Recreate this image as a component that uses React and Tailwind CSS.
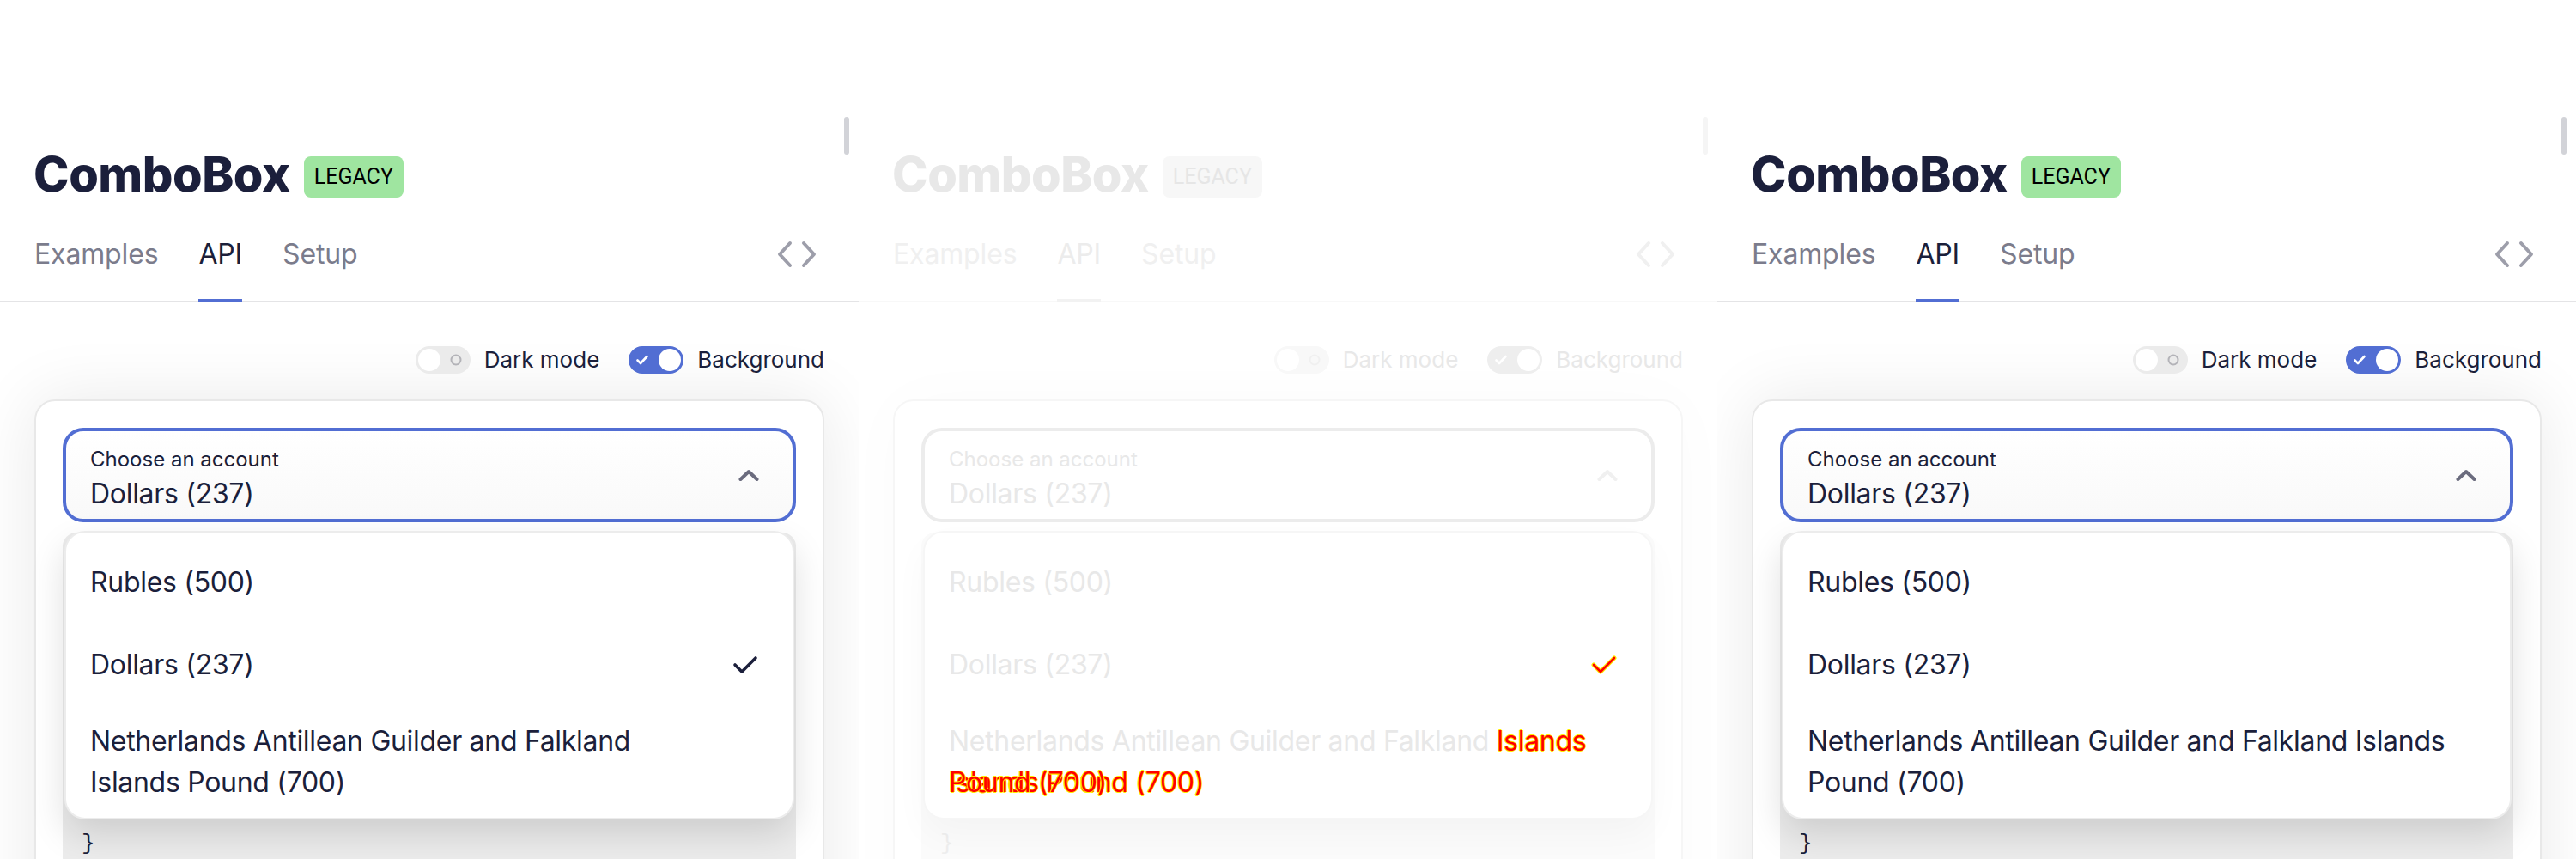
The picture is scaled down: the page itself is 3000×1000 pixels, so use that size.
import React from 'react';

const themes = {
  normal: {
    title: 'text-[#1b1f3b]',
    badge: 'bg-[#9fe5a0] text-black',
    tab: 'text-[#7b7c8c]',
    tabActive: 'text-[#1b1f3b] border-[#526ed3]',
    divider: 'border-[#e4e4e6]',
    icon: 'text-[#9d9eaa]',
    scroll: 'bg-[#d2d3d8]',
    text: 'text-[#1b1f3b]',
    toggleOff: 'bg-[#ebebeb]',
    toggleOn: 'bg-[#526ed3]',
    ring: 'text-[#b3b3b8]',
    card: 'border-[#e8e8e8] shadow-[0_0_80px_rgba(0,0,0,0.09)]',
    input: 'border-[#526ed3] bg-gradient-to-b from-white to-[#f9f9f9]',
    chevron: 'text-[#6b6c7e]',
    dropdown: 'border-[#ececec] shadow-[0_18px_40px_rgba(0,0,0,0.13)]',
    code: 'bg-[#ececec]',
  },
  faded: {
    title: 'text-[#e8e8e8]',
    badge: 'bg-[#f7f7f7] text-[#e6e6e6]',
    tab: 'text-[#f0f0f0]',
    tabActive: 'text-[#ececec] border-[#f2f2f2]',
    divider: 'border-[#f8f8f8]',
    icon: 'text-[#f0f0f0]',
    scroll: 'bg-[#f5f5f5]',
    text: 'text-[#e8e8e8]',
    toggleOff: 'bg-[#f8f8f8]',
    toggleOn: 'bg-[#eeeeee]',
    ring: 'text-[#f0f0f0]',
    card: 'border-[#f6f6f6] shadow-[0_0_80px_rgba(0,0,0,0.02)]',
    input: 'border-[#ececec] bg-white',
    chevron: 'text-[#f0f0f0]',
    dropdown: 'border-[#f6f6f6] shadow-[0_18px_40px_rgba(0,0,0,0.03)]',
    code: 'bg-[#fbfbfb]',
  },
};

const red = 'text-[#ff0000] [text-shadow:1px_0_#ffee00,-1px_0_#ffee00,0_1px_#ffee00,0_-1px_#ffee00]';

const Toggle = ({ on, t }) => (
  <div className={`relative w-[64px] h-[32px] rounded-full ${on ? t.toggleOn : t.toggleOff}`}>
    {on ? (
      <>
        <svg className="absolute left-[8px] top-[8px]" width="16" height="16" viewBox="0 0 16 16" fill="none">
          <path d="M2.5 8.5l3.5 3.5 7.5-8" stroke="white" strokeWidth="2.6" strokeLinecap="round" strokeLinejoin="round" />
        </svg>
        <div className="absolute right-[3px] top-[3px] w-[26px] h-[26px] rounded-full bg-white" />
      </>
    ) : (
      <>
        <div className="absolute left-[3px] top-[3px] w-[26px] h-[26px] rounded-full bg-white" />
        <svg className={`absolute left-[40px] top-[9px] ${t.ring}`} width="14" height="14" viewBox="0 0 14 14" fill="none">
          <circle cx="7" cy="7" r="5.5" stroke="currentColor" strokeWidth="2" />
        </svg>
      </>
    )}
  </div>
);

const Check = ({ diff }) =>
  diff ? (
    <svg className="ml-auto mr-[12px]" width="30" height="22" viewBox="0 0 30 22" fill="none">
      <path d="M3 11l8 8L27 3" stroke="#ffee00" strokeWidth="5" strokeLinecap="round" strokeLinejoin="round" />
      <path d="M3 11l8 8L27 3" stroke="#ff0000" strokeWidth="2.6" strokeLinecap="round" strokeLinejoin="round" />
    </svg>
  ) : (
    <svg className="ml-auto mr-[12px] text-[#1b1f3b]" width="30" height="22" viewBox="0 0 30 22" fill="none">
      <path d="M3 11l8 8L27 3" stroke="currentColor" strokeWidth="3.6" strokeLinecap="round" strokeLinejoin="round" />
    </svg>
  );

const Panel = ({ variant }) => {
  const t = variant === 'diff' ? themes.faded : themes.normal;
  const showCheck = variant !== 'b';

  let longOption;
  if (variant === 'a') {
    longOption = (
      <>
        Netherlands Antillean Guilder and Falkland
        <br />
        Islands Pound (700)
      </>
    );
  } else if (variant === 'b') {
    longOption = (
      <>
        Netherlands Antillean Guilder and Falkland Islands
        <br />
        Pound (700)
      </>
    );
  } else {
    longOption = (
      <>
        Netherlands Antillean Guilder and Falkland <span className={red}>Islands</span>
        <br />
        <span className="relative inline-block">
          <span className={red}>Islands Pound (700)</span>
          <span className={`absolute left-0 top-0 ${red}`}>Pound (700)</span>
        </span>
      </>
    );
  }

  return (
    <div className="relative w-[1000px] h-[1000px] shrink-0 overflow-hidden bg-white font-['Inter',sans-serif]">
      {/* scrollbar */}
      <div className={`absolute left-[983px] top-[136px] w-[6px] h-[44px] rounded-full ${t.scroll}`} />

      {/* header */}
      <div className="pt-[171px]">
        <div className="flex items-start px-[39px]">
          <h1 className={`text-[56px] leading-[64px] font-extrabold tracking-[-0.5px] ${t.title}`}>ComboBox</h1>
          <span
            className={`ml-[16px] mt-[11px] h-[48px] px-[12px] rounded-[8px] flex items-center text-[25px] font-['Roboto',sans-serif] ${t.badge}`}
          >
            LEGACY
          </span>
        </div>

        <div className={`mt-[41px] flex items-end px-[40px] border-b-2 ${t.divider}`}>
          <div className="flex gap-[47px] text-[32px] leading-[40px] tracking-[-0.15px]">
            <span className={`pb-[32px] -mb-[2px] border-b-4 border-transparent ${t.tab}`}>Examples</span>
            <span className={`pb-[32px] -mb-[2px] border-b-4 ${t.tabActive}`}>API</span>
            <span className={`pb-[32px] -mb-[2px] border-b-4 border-transparent ${t.tab}`}>Setup</span>
          </div>
          <svg
            className={`ml-auto mb-[38px] mr-[8px] ${t.icon}`}
            width="48"
            height="32"
            viewBox="0 0 48 32"
            fill="none"
          >
            <path d="M16 3L4 16l12 13M32 3l12 13-12 13" stroke="currentColor" strokeWidth="4" strokeLinecap="round" strokeLinejoin="round" />
          </svg>
        </div>
      </div>

      {/* toggles */}
      <div className={`mt-[51px] flex items-center justify-end pr-[40px] text-[26px] leading-[32px] ${t.text}`}>
        <Toggle on={false} t={t} />
        <span className="ml-[16px]">Dark mode</span>
        <div className="ml-[34px]">
          <Toggle on t={t} />
        </div>
        <span className="ml-[16px]">Background</span>
      </div>

      {/* demo card */}
      <div className={`mt-[30px] mx-[40px] h-[700px] rounded-[24px] border-2 bg-white p-[31px] ${t.card}`}>
        <div className="relative">
          <div className={`h-[110px] rounded-[24px] border-4 flex items-center pl-[28px] pr-[39px] ${t.input}`}>
            <div className={`mt-[8px] flex flex-col ${t.text}`}>
              <span className="text-[24px] leading-[32px]">Choose an account</span>
              <span className="mt-[4px] text-[32px] leading-[40px] tracking-[-0.3px]">Dollars (237)</span>
            </div>
            <svg className={`ml-auto ${t.chevron}`} width="24" height="16" viewBox="0 0 24 16" fill="none">
              <path d="M2.5 13L12 4l9.5 9" stroke="currentColor" strokeWidth="4" strokeLinecap="round" strokeLinejoin="round" />
            </svg>
          </div>

          <div className={`mt-[12px] rounded-t-[16px] h-[400px] pt-[342px] px-[22px] font-['Liberation_Mono',monospace] text-[26px] leading-[40px] ${t.code}`}>
            <span className={variant === 'diff' ? 'text-[#eeeeee]' : 'text-[#1b1f3b]'}>{'}'}</span>
          </div>

          {/* dropdown */}
          <div className={`absolute left-[2px] right-[2px] top-[120px] rounded-[24px] border-2 bg-white px-[8px] pt-[10px] pb-[6px] ${t.dropdown}`}>
            <div className={`text-[32px] leading-[48px] tracking-[-0.3px] ${t.text}`}>
              <div className="min-h-[96px] py-[14px] px-[20px] flex items-center">Rubles (500)</div>
              <div className="min-h-[96px] py-[14px] px-[20px] flex items-center">
                <span>Dollars (237)</span>
                {showCheck && <Check diff={variant === 'diff'} />}
              </div>
              <div className="min-h-[96px] pt-[17px] pb-[11px] px-[20px] flex items-center whitespace-nowrap">
                <span>{longOption}</span>
              </div>
            </div>
          </div>
        </div>
      </div>
    </div>
  );
};

const App = () => (
  <div className="flex w-[3000px] h-[1000px] overflow-hidden bg-white">
    <Panel variant="a" />
    <Panel variant="diff" />
    <Panel variant="b" />
  </div>
);

export default App;
